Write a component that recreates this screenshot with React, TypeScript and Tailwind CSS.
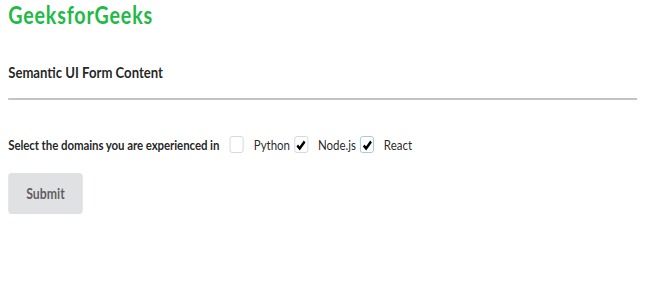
export default function App() {
  const items = [
    { label: "Python", checked: false },
    { label: "Node.js", checked: true },
    { label: "React", checked: true, focus: true },
  ];

  return (
    <div className="h-[300px] w-[650px] overflow-hidden bg-white">
      {/* the page is squeezed horizontally in the screenshot */}
      <div className="w-[793px] origin-top-left scale-x-[0.82] px-[10px] font-['Lato',sans-serif] text-[#000000de]">
        <h1 className="text-[24px] font-bold leading-[29px] tracking-[1px] text-[#21ba45]">GeeksforGeeks</h1>
        <h4 className="mt-[33px] text-[16px] font-bold leading-[20px]">Semantic UI Form Content</h4>
        <div className="mt-[16px] mr-[6px] border-t-2 border-[#c4c4c4]" />
        <form className="mt-[34px] flex items-center text-[14px]">
          <label className="mr-[13px] font-bold tracking-[-0.1px]">Select the domains you are experienced in</label>
          {items.map((it) => (
            <label key={it.label} className="mr-[5px] flex items-center">
              <span
                className={`flex h-[17px] w-[17px] items-center justify-center rounded-[3px] border ${
                  it.focus ? "border-[#96c8da]" : "border-[#d4d4d5]"
                }`}
              >
                {it.checked && (
                  <svg viewBox="0 0 12 12" className="h-[12px] w-[12px]">
                    <path d="M1.5 6.5 L4.5 9.5 L10.5 2.5" fill="none" stroke="#000" strokeWidth="2.8" />
                  </svg>
                )}
              </span>
              <span className="ml-[12px]">{it.label}</span>
            </label>
          ))}
        </form>
        <button className="mt-[18px] h-[41px] w-[91px] rounded-[4px] bg-[#e0e1e2] text-[15px] font-bold text-[#00000099]">
          Submit
        </button>
      </div>
    </div>
  );
}
